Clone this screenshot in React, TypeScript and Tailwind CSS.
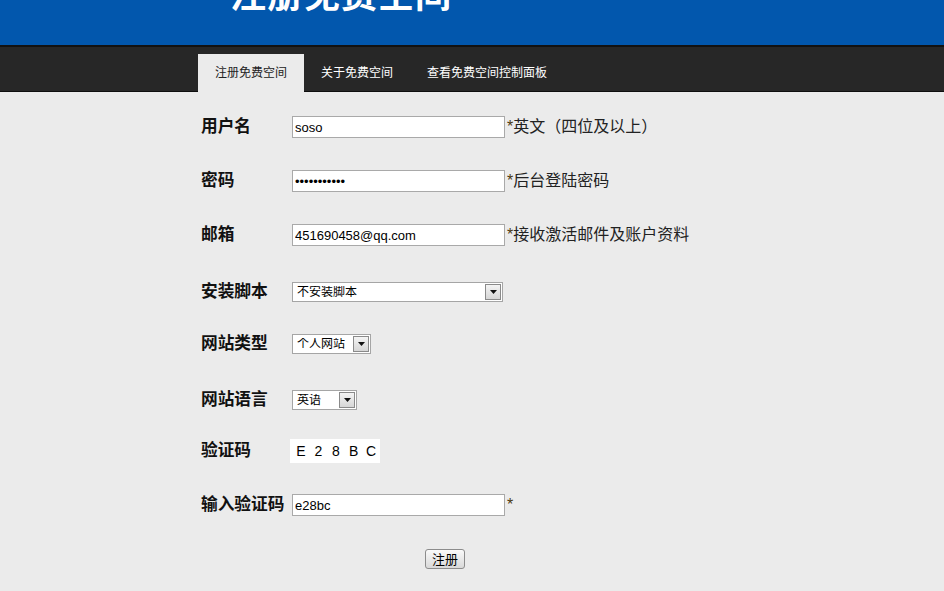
const cjk = "font-['Liberation_Sans','Noto_Sans_CJK_SC',sans-serif]";

const tabs = ["注册免费空间", "关于免费空间", "查看免费空间控制面板"];
const captcha = ["E", "2", "8", "B", "C"];

function TextInput({ value, type = "text" }: { value: string; type?: string }) {
  return (
    <input
      readOnly
      type={type}
      value={value}
      className={`h-[22px] w-[213px] border border-[#a9a9a9] bg-white px-[2px] text-[13px] text-black outline-none ${cjk}`}
    />
  );
}

function FakeSelect({ value, width }: { value: string; width: string }) {
  return (
    <div className={`flex h-[20px] items-center border border-[#a5a5a5] bg-white ${width}`}>
      <span className={`flex-1 truncate pl-[4px] text-[12px] leading-none text-black ${cjk}`}>{value}</span>
      <span className="m-[1px] flex h-[16px] w-[16px] items-center justify-center border border-[#8a8a8a] bg-gradient-to-b from-[#f4f4f4] to-[#d6d6d6]">
        <svg width="7" height="4" viewBox="0 0 7 4">
          <path d="M0 0h7L3.5 4z" fill="#111" />
        </svg>
      </span>
    </div>
  );
}

function Hint({ text }: { text: string }) {
  return (
    <span className={`ml-[2px] text-[16px] text-[#222] ${cjk}`}>
      <span className="text-[#4a3a10]">*</span>
      {text}
    </span>
  );
}

function Row({ label, children, extra = "" }: { label: string; children: React.ReactNode; extra?: string }) {
  return (
    <div className={`flex h-[54px] items-center ${extra}`}>
      <span className={`w-[91px] shrink-0 text-[16.7px] font-bold text-[#111] ${cjk}`}>{label}</span>
      {children}
    </div>
  );
}

export default function App() {
  return (
    <div className={`min-h-[591px] w-full overflow-hidden bg-[#ebebeb] ${cjk}`}>
      <header className="relative h-[45px] overflow-hidden bg-[#0257ad]">
        <h1 className="absolute left-[230px] top-[-24px] whitespace-nowrap text-[36px] font-bold leading-[40px] tracking-[1px] text-white">
          注册免费空间
        </h1>
      </header>

      <nav className="h-[47px] border-t-2 border-b border-t-[#121212] border-b-[#0e0e0e] bg-[#272727] pl-[198px]">
        <ul className="flex h-full items-end">
          {tabs.map((t, i) => (
            <li
              key={t}
              className={`flex items-center px-[17px] text-[12px] ${
                i === 0 ? "mb-[-1px] h-[38px] bg-[#ebebeb] text-[#222]" : "h-[37px] text-white"
              }`}
            >
              {t}
            </li>
          ))}
        </ul>
      </nav>

      <form className="ml-[201px] mt-[8px]">
        <Row label="用户名">
          <TextInput value="soso" />
          <Hint text="英文（四位及以上）" />
        </Row>
        <Row label="密码">
          <TextInput value="12345678901" type="password" />
          <Hint text="后台登陆密码" />
        </Row>
        <Row label="邮箱">
          <TextInput value="451690458@qq.com" />
          <Hint text="接收激活邮件及账户资料" />
        </Row>
        <Row label="安装脚本" extra="pt-[6px]">
          <FakeSelect value="不安装脚本" width="w-[211px]" />
        </Row>
        <Row label="网站类型" extra="pt-[1px]">
          <FakeSelect value="个人网站" width="w-[79px]" />
        </Row>
        <Row label="网站语言" extra="pt-[5px]">
          <FakeSelect value="英语" width="w-[65px]" />
        </Row>
        <Row label="验证码">
          <span className="ml-[-2px] flex h-[24px] w-[90px] items-center bg-white pl-[2px] text-[14px] text-black">
            {captcha.map((c) => (
              <span key={c} className="w-[18.5px] text-center">
                {c}
              </span>
            ))}
          </span>
        </Row>
        <Row label="输入验证码">
          <TextInput value="e28bc" />
          <Hint text="" />
        </Row>
        <div className="flex h-[54px] items-center pl-[224px]">
          <button
            type="button"
            className="h-[20px] w-[40px] rounded-[3px] border border-[#8c8c8c] bg-gradient-to-b from-[#fafafa] to-[#d9d9d9] text-[13px] leading-none text-black"
          >
            注册
          </button>
        </div>
      </form>
    </div>
  );
}
